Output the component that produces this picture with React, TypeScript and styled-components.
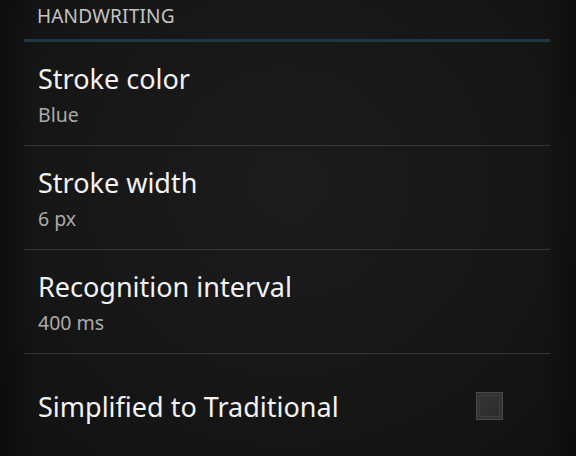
import React from "react";
import styled, { createGlobalStyle } from "styled-components";

const Global = createGlobalStyle`
  html, body { margin: 0; padding: 0; background: #141414; }
  body { font-family: "Noto Sans", "Open Sans", sans-serif; }
`;

const Screen = styled.div`
  width: 576px;
  height: 456px;
  overflow: hidden;
  background:
    linear-gradient(90deg, rgba(0,0,0,0.35) 0%, rgba(0,0,0,0) 6%, rgba(0,0,0,0) 94%, rgba(0,0,0,0.3) 100%),
    radial-gradient(ellipse at 50% 40%, #1c1c1c 0%, #161616 60%, #111 100%);
  display: flex;
  flex-direction: column;
`;

const Header = styled.div`
  flex-shrink: 0;
  height: 42px;
  margin: 0 26px 0 24px;
  padding: 7px 0 0 13px;
  border-bottom: 3px solid #1e3846;
  font-size: 19px;
  line-height: 1;
  color: #c4c4c4;
  box-sizing: border-box;
  letter-spacing: 0.2px;
`;

const Row = styled.div<{ $last?: boolean }>`
  height: 104px;
  margin: 0 26px 0 24px;
  padding-left: 14px;
  border-bottom: ${(p) => (p.$last ? "none" : "1px solid #363636")};
  display: flex;
  align-items: center;
  justify-content: space-between;
  box-sizing: border-box;
  flex-shrink: 0;
`;

const Texts = styled.div<{ $two?: boolean }>`
  display: flex;
  flex-direction: column;
  padding-top: ${(p) => (p.$two ? "4px" : "2px")};
`;

const Title = styled.div`
  font-size: 27px;
  color: #f2f2f2;
  line-height: 34px;
`;

const Summary = styled.div`
  font-size: 19.5px;
  color: #ababab;
  line-height: 30px;
  margin-top: 4px;
`;

const Check = styled.div`
  width: 27px;
  height: 28px;
  margin-right: 47px;
  box-sizing: border-box;
  border: 1px solid #4a4a4a;
  background: linear-gradient(135deg, #353535, #2b2b2b);
  box-shadow: inset 0 0 0 2px #333, inset 0 0 0 3px #3c3c3c;
`;

const items = [
  { title: "Stroke color", summary: "Blue" },
  { title: "Stroke width", summary: "6 px" },
  { title: "Recognition interval", summary: "400 ms" },
];

export default function App() {
  return (
    <>
      <Global />
      <Screen>
        <Header>HANDWRITING</Header>
        {items.map((it) => (
          <Row key={it.title}>
            <Texts $two>
              <Title>{it.title}</Title>
              <Summary>{it.summary}</Summary>
            </Texts>
          </Row>
        ))}
        <Row $last>
          <Texts>
            <Title>Simplified to Traditional</Title>
          </Texts>
          <Check />
        </Row>
      </Screen>
    </>
  );
}
